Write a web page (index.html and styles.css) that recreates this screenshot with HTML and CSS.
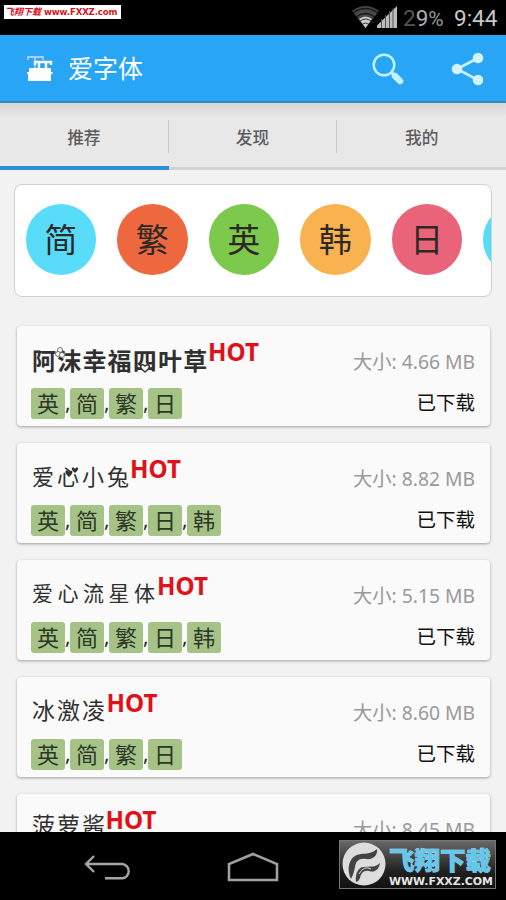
FILE: index.html
```html
<!DOCTYPE html>
<html lang="zh-CN">
<head>
<meta charset="utf-8">
<title>爱字体</title>
<link rel="stylesheet" href="styles.css">
</head>
<body>
<div class="phone">
  <div class="status">
    <div class="site-label"><span class="site-cn">飞翔下载</span><span class="site-url">www.FXXZ.com</span></div>
    <svg class="signals" width="46" height="24" viewBox="0 0 46 24">
      <path d="M0 6Q13.500-4 27 6L13.500 23Z" fill="#484848"/>
      <path d="M1 8Q13.500-1 26 8M4 12Q13.500 5 23 12" fill="none" stroke="#171717" stroke-width="1.500"/>
      <path d="M7 14Q13.500 9 20 14L13.500 23Z" fill="#ccc"/>
      <path d="M8 16Q13.500 12 19 16M10.500 19Q13.500 17 16.500 19" fill="none" stroke="#333" stroke-width="1"/>
      <path d="M25 23V20.500L45 1V23Z" fill="#bbb"/>
      <path d="M29.500 14V23M33.500 10V23M37.500 6V23M41 3V23" stroke="#555" stroke-width="1"/>
    </svg>
    <span class="battery"><i>2</i>9<b>%</b></span>
    <span class="clock">9:44</span>
  </div>
  <header class="appbar">
    <svg class="logo" width="28" height="28" viewBox="0 0 28 28">
      <path d="M2 5V2H17V5M9 2V14M6 14H12" fill="none" stroke="#a9cdf8" stroke-width="1.800"/>
      <path d="M9 10V7H25V10M13 7V14M20 7V14" fill="none" stroke="#fff" stroke-width="2.400"/>
      <path d="M3 13H25V17H26.500V19H25V26H2V19H1V17H3Z" fill="#fff"/>
    </svg>
    <h1>爱字体</h1>
    <svg class="search" width="34" height="34" viewBox="0 0 34 34">
      <circle cx="13" cy="13" r="10.300" fill="none" stroke="#c2f4ff" stroke-width="2.400"/>
      <path d="M20 20L24 24" stroke="#c2f4ff" stroke-width="3"/>
      <path d="M24 24L29 29" stroke="#c2f4ff" stroke-width="6.500" stroke-linecap="round"/>
    </svg>
    <svg class="share" width="34" height="34" viewBox="0 0 34 34">
      <path d="M27 6L6 17L27 28" fill="none" stroke="#c9f2ff" stroke-width="2.600"/>
      <g fill="#d2f2ff"><circle cx="27" cy="6" r="5.300"/><circle cx="6" cy="17" r="5.300"/><circle cx="27" cy="28" r="5.300"/></g>
    </svg>
  </header>
  <nav class="tabs">
    <div class="tab active"><span>推荐</span></div>
    <div class="tab"><span>发现</span></div>
    <div class="tab"><span>我的</span></div>
  </nav>
  <main>
    <section class="languages">
      <span class="circle cyan">简</span><span class="circle orange">繁</span><span class="circle green">英</span><span class="circle yellow">韩</span><span class="circle pink">日</span><span class="circle cyan"></span>
    </section>
    <section class="list">
      <article class="card">
        <div class="row"><h2 class="heavy">阿沫幸福四叶草<svg class="ornament" width="178" height="50" viewBox="0 0 178 50"><g fill="#fafafa" stroke="#555" stroke-width=".8"><circle cx="29" cy="15" r="2.500"/><circle cx="27" cy="19" r="2.500"/><circle cx="31" cy="20" r="2.500"/></g><path d="M114 37C106 31 111 28 114 31C117 28 122 31 114 37Z" fill="#fafafa" stroke="#303030" stroke-width="1.500"/></svg></h2><strong>HOT</strong><span class="size">大小: 4.66 MB</span></div>
        <div class="row langs"><span class="tag">英</span><span class="comma">,</span><span class="tag">简</span><span class="comma">,</span><span class="tag">繁</span><span class="comma">,</span><span class="tag">日</span><span class="state">已下载</span></div>
      </article>
      <article class="card">
        <div class="row"><h2 class="rabbit">爱心小兔<svg class="ornament" width="100" height="50" viewBox="0 0 100 50"><path d="M38 25C31 19 36 17 38 20C41 17 44 20 38 25ZM44 21C38 16 42 14 44 17C46 14 50 16 44 21Z" fill="#303030"/></svg></h2><strong>HOT</strong><span class="size">大小: 8.82 MB</span></div>
        <div class="row langs"><span class="tag">英</span><span class="comma">,</span><span class="tag">简</span><span class="comma">,</span><span class="tag">繁</span><span class="comma">,</span><span class="tag">日</span><span class="comma">,</span><span class="tag">韩</span><span class="state">已下载</span></div>
      </article>
      <article class="card">
        <div class="row"><h2 class="meteor">爱心流星体</h2><strong>HOT</strong><span class="size">大小: 5.15 MB</span></div>
        <div class="row langs"><span class="tag">英</span><span class="comma">,</span><span class="tag">简</span><span class="comma">,</span><span class="tag">繁</span><span class="comma">,</span><span class="tag">日</span><span class="comma">,</span><span class="tag">韩</span><span class="state">已下载</span></div>
      </article>
      <article class="card">
        <div class="row"><h2 class="ice">冰激凌</h2><strong>HOT</strong><span class="size">大小: 8.60 MB</span></div>
        <div class="row langs"><span class="tag">英</span><span class="comma">,</span><span class="tag">简</span><span class="comma">,</span><span class="tag">繁</span><span class="comma">,</span><span class="tag">日</span><span class="state">已下载</span></div>
      </article>
      <article class="card">
        <div class="row"><h2 class="ice jam">菠萝酱</h2><strong>HOT</strong><span class="size">大小: 8.45 MB</span></div>
      </article>
    </section>
  </main>
  <footer class="navbar">
    <svg class="back" width="48" height="28" viewBox="0 0 48 28">
      <path d="M10 2L2 10L10 18M2 10H38.500A7 7.200 0 0 1 38.500 24.300H21" fill="none" stroke="#a5a5a5" stroke-width="2.400"/>
    </svg>
    <svg class="home" width="52" height="30" viewBox="0 0 52 30">
      <path d="M2 28V12L26 2L50 12V28Z" fill="none" stroke="#a0a0a0" stroke-width="2.600"/>
    </svg>
    <div class="watermark">
      <svg width="46" height="46" viewBox="0 0 46 46">
        <circle cx="23" cy="23" r="21.500" fill="#ddd"/>
        <path d="M10 38C6 30 7 19 14 15C20 11 28 15 36 8C37 15 31 19 25 18C18 17 15 20 14 26C13 31 12 34 10 38Z" fill="#444"/>
        <path d="M15 41C14 33 17 26 23 26C29 25 34 27 39 22C38 29 33 32 28 30C22 29 20 33 19 37Q18 40 15 41Z" fill="#444"/>
        <path d="M18 33Q23 24 30 28" fill="none" stroke="#ddd" stroke-width="1"/>
      </svg>
      <div class="mark-text"><span class="mark-cn">飞翔下载</span><svg class="mark-url" width="106" height="12"><text x="0" y="10" textLength="104" lengthAdjust="spacingAndGlyphs">WWW.FXXZ.COM</text></svg></div>
    </div>
  </footer>
</div>
</body>
</html>
```
FILE: styles.css
```css
* { box-sizing: border-box; }
body { margin: 0; background: #000; font-family: "Noto Sans", "Noto Sans CJK SC", sans-serif; }
svg { display: block; flex: none; }
h1, h2 { margin: 0; font-weight: 400; }
.phone { width: 506px; height: 900px; display: flex; flex-direction: column; overflow: hidden; }

.status { height: 35px; flex: none; display: flex; align-items: flex-start; background: #000; white-space: nowrap; }
.site-label { width: 117px; height: 14px; margin: 5px 0 0 4px; padding-left: 1px; background: #fff; color: #d8101c; display: flex; align-items: center; gap: 3px; line-height: 14px; }
.site-cn { width: 36px; font: italic 700 9px/14px "Noto Sans CJK SC", sans-serif; }
.site-url { font: 700 8.6px/14px "DejaVu Sans", sans-serif; letter-spacing: -.15px; }
.signals { margin: 5px 0 0 231px; }
.battery { width: 42px; margin: 3px 0 0 5px; color: #aaa; font: 22.5px/31px Roboto, sans-serif; }
.battery i { color: #555; font-style: normal; }
.battery b { color: #999; font-weight: 400; font-size: 21px; }
.clock { margin: 3px 0 0 9px; color: #c8c8c8; font: 22.5px/31px Roboto, sans-serif; }

.appbar { height: 68px; flex: none; display: flex; align-items: center; padding-left: 26px; background: #28a5f5; border-bottom: 2px solid #3b87b9; }
.appbar h1 { width: 220px; margin-left: 14px; color: #fff; font-size: 25px; line-height: 34px; }
.logo { margin-top: 2px; }
.search { margin: 1px 0 0 83px; }
.share { margin: 2px 0 0 46px; }

.tabs { height: 67px; flex: none; display: grid; grid-template-columns: repeat(3, 1fr); background: linear-gradient(#d7d7d7, #e2e2e2 10px, #e8e8e8 14px); }
.tab { display: flex; padding-top: 17px; border-bottom: 3px solid #d1d1d1; }
.tab.active { border-bottom: 4px solid #2f8ed6; }
.tab span { flex: 1; height: 33px; color: #5c5c5c; font: 500 16.700px/34px "Noto Sans CJK SC", sans-serif; text-align: center; border-right: 1px solid #c8c8c8; }
.tab:last-child span { border: 0; }

main { height: 662px; flex: none; overflow: hidden; background: #f2f2f2; padding: 14px 14px 0; }
.languages { height: 113px; display: flex; align-items: center; gap: 21.300px; padding: 0 0 2px 10.500px; overflow: hidden; background: #fff; border: 1px solid #d0d0d0; border-radius: 8px; }
.circle { width: 70.500px; height: 70.500px; flex: none; border-radius: 50%; color: #2c2925; font: 33px/69px "Noto Sans CJK SC", sans-serif; text-align: center; }
.languages .circle { margin-right: -.3px; }
.cyan { background: #59dcfa; }
.orange { background: #ed683f; }
.green { background: #7cc94b; }
.yellow { background: #f8b250; }
.pink { background: #e96478; }

.list { display: flex; flex-direction: column; gap: 16.900px; margin: 29px 2px 0 3px; }
.card { height: 100px; flex: none; padding: 9px 15px 0 14px; border-radius: 4px; background: #fafafa; box-shadow: 0 1px 3px rgba(0,0,0,.35); }
.row { display: flex; height: 53px; white-space: nowrap; }
h2 { position: relative; height: 50px; color: #303030; font: 24px/50px "Noto Sans CJK SC", sans-serif; }
.ornament { position: absolute; left: 0; top: 0; }
.heavy { width: 177px; font-weight: 700; letter-spacing: 1.200px; padding-left: 1px; }
.rabbit { width: 99px; font-size: 22px; line-height: 46px; letter-spacing: 3px; padding-left: 1px; }
.meteor { width: 126px; font-size: 21px; line-height: 47px; letter-spacing: 4.500px; padding-left: 1px; }
.ice { width: 75.500px; font-size: 23px; line-height: 47px; letter-spacing: 2px; padding-left: 1px; }
.jam { width: 74.500px; line-height: 43px; }
strong { color: #df1119; font: 700 24.200px/33px "Noto Sans", sans-serif; }
.size { margin-left: auto; color: #999; font-size: 19.300px; line-height: 54px; }
.langs { height: 31px; }
.tag { width: 34px; height: 31px; border-radius: 3px; background: #a6c387; color: #2c3727; font: 22px/28px "Noto Sans CJK SC", sans-serif; text-align: center; }
.comma { width: 5px; color: #292929; font-size: 21px; line-height: 29px; }
.state { margin-left: auto; color: #111; font: 19.500px/27px "Noto Sans CJK SC", sans-serif; }

.navbar { height: 68px; flex: none; display: flex; background: #000; }
.back { margin: 22px 0 0 84px; }
.home { margin: 20px 0 0 95px; }
.watermark { width: 157px; height: 49px; flex: none; display: flex; margin: 8px 0 0 60px; padding-left: 1px; border: 1px solid #777; background: linear-gradient(#686868, #202020 65%, #111); }
.mark-text { width: 107px; margin-left: 2px; }
.mark-cn { display: block; height: 34px; color: #62c8ee; font: 900 25.500px/36px "Noto Sans CJK SC", sans-serif; -webkit-text-stroke: .6px #c9efff; paint-order: stroke fill; white-space: nowrap; }
.mark-url text { fill: #e5e5e5; font: 700 11px "DejaVu Sans", sans-serif; }
```
